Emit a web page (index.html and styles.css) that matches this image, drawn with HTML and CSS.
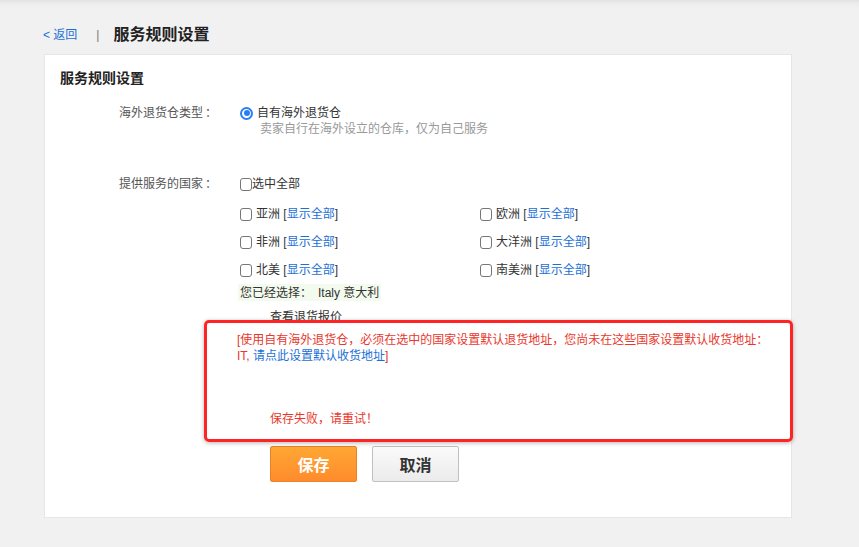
FILE: index.html
```html
<!DOCTYPE html>
<html lang="zh-CN">
<head>
<meta charset="utf-8">
<title>服务规则设置</title>
<link rel="stylesheet" href="styles.css">
</head>
<body>
<div class="page">
  <div class="header">
    <a class="back">&lt; 返回</a>
    <span class="sep">|</span>
    <h1 class="title">服务规则设置</h1>
  </div>
  <div class="card">
    <h2 class="card-title">服务规则设置</h2>
    <div class="form">
      <div class="row">
        <div class="label">海外退货仓类型<span class="colon">：</span></div>
        <div class="value">
          <div class="radio-line"><span class="radio"></span><span>自有海外退货仓</span></div>
          <div class="hint">卖家自行在海外设立的仓库，仅为自己服务</div>
        </div>
      </div>
      <div class="row row-countries">
        <div class="label">提供服务的国家<span class="colon">：</span></div>
        <div class="value">
          <div class="check-line tight"><span class="checkbox"></span><span>选中全部</span></div>
          <div class="regions">
            <div class="check-line"><span class="checkbox"></span><span>亚洲 [<a class="link">显示全部</a>]</span></div>
            <div class="check-line"><span class="checkbox"></span><span>欧洲 [<a class="link">显示全部</a>]</span></div>
            <div class="check-line"><span class="checkbox"></span><span>非洲 [<a class="link">显示全部</a>]</span></div>
            <div class="check-line"><span class="checkbox"></span><span>大洋洲 [<a class="link">显示全部</a>]</span></div>
            <div class="check-line"><span class="checkbox"></span><span>北美 [<a class="link">显示全部</a>]</span></div>
            <div class="check-line"><span class="checkbox"></span><span>南美洲 [<a class="link">显示全部</a>]</span></div>
          </div>
          <div class="selected"><span>您已经选择：</span><span class="sel-val">Italy 意大利</span></div>
          <div class="quote">查看退货报价</div>
          <div class="error">[使用自有海外退货仓，必须在选中的国家设置默认退货地址，您尚未在这些国家设置默认收货地址：<br>IT, <a class="link">请点此设置默认收货地址</a>]</div>
          <div class="fail">保存失败，请重试！</div>
          <div class="actions">
            <button class="btn btn-primary">保存</button>
            <button class="btn btn-default">取消</button>
          </div>
        </div>
      </div>
    </div>
    <div class="highlight"></div>
  </div>
</div>
</body>
</html>
```
FILE: styles.css
```css
* { box-sizing: border-box; }
html, body { margin: 0; padding: 0; }
body {
  background: #f1f1f1;
  font-family: "Liberation Sans", "Noto Sans CJK SC", sans-serif;
  font-size: 12px;
  line-height: 16px;
  color: #333;
  width: 859px;
  height: 547px;
  overflow: hidden;
}
.page {
  min-height: 547px;
  background: linear-gradient(to bottom, #e2e2e4 0, #ebebec 3px, #f1f1f1 8px, #f1f1f1 100%);
  padding-top: 23px;
}
.header {
  display: flex;
  align-items: center;
  height: 24px;
  padding-left: 43px;
}
.back { color: #1b6fd6; font-size: 12px; }
.sep { color: #777; margin-left: 19px; margin-right: 14px; font-size: 12px; }
.title { margin: 0; font-size: 16px; font-weight: bold; color: #222; }

.card {
  position: relative;
  margin: 7px 0 0 44px;
  width: 748px;
  background: #fff;
  border: 1px solid #e6e6e6;
  padding: 13px 15px 35px;
}
.card-title {
  margin: 0;
  font-size: 14px;
  line-height: 20px;
  font-weight: bold;
  color: #222;
}
.form { margin-top: 17px; }
.row {
  display: grid;
  grid-template-columns: 157px 1fr;
  column-gap: 23px;
  align-items: start;
}
.row-countries { margin-top: 39px; }
.label { text-align: right; color: #555; }
.colon { display: inline-block; width: 14px; text-align: right; }
.radio-line { display: flex; align-items: center; gap: 4px; color: #333; }
.radio {
  width: 13px; height: 13px;
  border-radius: 50%;
  background: #fff;
  border: 2px solid #2a7ef3;
  display: inline-flex;
  align-items: center;
  justify-content: center;
  flex: none;
}
.radio::after {
  content: "";
  width: 6px; height: 6px;
  border-radius: 50%;
  background: #2a7ef3;
}
.hint { color: #999; padding-left: 20px; }

.check-line { display: flex; align-items: center; gap: 4px; color: #333; }
.check-line.tight { gap: 0; }
.checkbox {
  width: 12px; height: 13px;
  border: 1px solid #767676;
  border-radius: 3px;
  background: #fff;
  flex: none;
}
.link { color: #1b6fd6; }
.regions {
  margin-top: 14px;
  display: grid;
  grid-template-columns: 240px 240px;
  row-gap: 12px;
}
.selected {
  margin-top: 6px;
  margin-left: -2px;
  padding: 0 2px;
  background: #f3fbee;
  display: inline-flex;
  gap: 6px;
  height: 17px;
  align-items: center;
  color: #333;
}
.quote { margin-top: 8px; margin-left: 30px; color: #333; }
.error { margin-top: 7px; margin-left: -3px; color: #e8372c; }
.fail { margin-top: 47px; margin-left: 30px; color: #e8372c; }
.actions { margin-top: 19px; margin-left: 30px; display: flex; gap: 15px; }
.btn {
  width: 87px; height: 36px;
  font-family: "Liberation Sans", "Noto Sans CJK SC", sans-serif;
  font-size: 16px;
  font-weight: bold;
  border-radius: 2px;
  padding: 0;
}
.btn-primary {
  color: #fff;
  background: linear-gradient(to bottom, #ffa734, #ff8b2c);
  border: 1px solid #e8822a;
}
.btn-default {
  color: #333;
  background: linear-gradient(to bottom, #fafafa, #ebebeb);
  border: 1px solid #c0c0c0;
}
.highlight {
  position: absolute;
  left: 159px;
  top: 265px;
  width: 589px;
  height: 122px;
  border: 3px solid #ff2323;
  border-radius: 5px;
  box-shadow: 0 1px 4px rgba(0, 0, 0, 0.3);
  pointer-events: none;
}
```
